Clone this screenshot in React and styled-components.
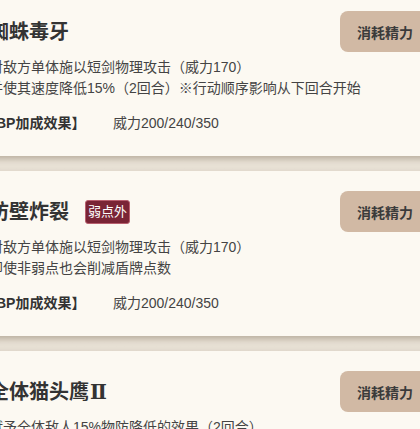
import React from "react";
import styled, { createGlobalStyle } from "styled-components";

const GlobalStyle = createGlobalStyle`
  html, body {
    margin: 0;
    padding: 0;
    background: #fbf8f1;
    overflow: hidden;
  }
  body {
    font-family: "Liberation Sans", "Noto Sans CJK SC", sans-serif;
  }
`;

const List = styled.div`
  display: flex;
  flex-direction: column;
  gap: 15px;
  width: 481px;
  margin-left: -31px;
  margin-top: -9px;
  background: linear-gradient(#e9e2d6, #e6dfd3);
`;

const Card = styled.section`
  background: #fcf9f2;
  padding: 20px 20px 22px;
  box-shadow: 0 3px 6px rgba(110, 95, 70, 0.38);
`;

const Header = styled.div`
  display: flex;
  align-items: center;
  justify-content: space-between;
  height: 41px;
`;

const TitleRow = styled.div`
  display: flex;
  align-items: center;
  gap: 16px;
`;

const Title = styled.h2`
  margin: 0;
  font-size: 20px;
  font-weight: 700;
  color: #333;
  line-height: 28px;
`;

const Numeral = styled.span`
  font-family: "DejaVu Serif", "Noto Sans CJK SC", serif;
  margin-left: 1px;
`;

const Badge = styled.span`
  display: inline-block;
  padding: 2px 2px;
  font-size: 13px;
  line-height: 18px;
  color: #fff;
  background: #7a2536;
  border: 1px solid #b8606f;
  border-radius: 3px;
`;

const CostButton = styled.button`
  height: 41px;
  padding: 0 17px;
  border: none;
  border-radius: 8px;
  background: #d1b9a4;
  color: #3b3b3b;
  font-family: inherit;
  font-size: 14px;
  font-weight: 700;
`;

const Desc = styled.p`
  margin: 5px 0 0;
  font-size: 14px;
  line-height: 21px;
  color: #444;
`;

const Bonus = styled.div`
  display: flex;
  margin-top: 14px;
  font-size: 14px;
  line-height: 21px;
  color: #444;
`;

const BonusLabel = styled.span`
  min-width: 131px;
  margin-left: -7px;
  font-weight: 700;
  color: #333;
`;

const skills = [
  {
    name: "蜘蛛毒牙",
    lines: ["对敌方单体施以短剑物理攻击（威力170）", "并使其速度降低15%（2回合）※行动顺序影响从下回合开始"],
    bonus: "威力200/240/350",
  },
  {
    name: "防壁炸裂",
    badge: "弱点外",
    lines: ["对敌方单体施以短剑物理攻击（威力170）", "即使非弱点也会削减盾牌点数"],
    bonus: "威力200/240/350",
  },
  {
    name: "全体猫头鹰",
    numeral: "Ⅱ",
    lines: ["赋予全体敌人15%物防降低的效果（2回合）", "※行动顺序影响从下回合开始"],
    bonus: "持续3/4/5回合",
  },
];

export default function App() {
  return (
    <>
      <GlobalStyle />
      <List>
        {skills.map((s) => (
          <Card key={s.name}>
            <Header>
              <TitleRow>
                <Title>
                  {s.name}
                  {s.numeral && <Numeral>{s.numeral}</Numeral>}
                </Title>
                {s.badge && <Badge>{s.badge}</Badge>}
              </TitleRow>
              <CostButton>消耗精力</CostButton>
            </Header>
            <Desc>
              {s.lines.map((l, i) => (
                <React.Fragment key={i}>
                  {i > 0 && <br />}
                  {l}
                </React.Fragment>
              ))}
            </Desc>
            <Bonus>
              <BonusLabel>【BP加成效果】</BonusLabel>
              <span>{s.bonus}</span>
            </Bonus>
          </Card>
        ))}
      </List>
    </>
  );
}
